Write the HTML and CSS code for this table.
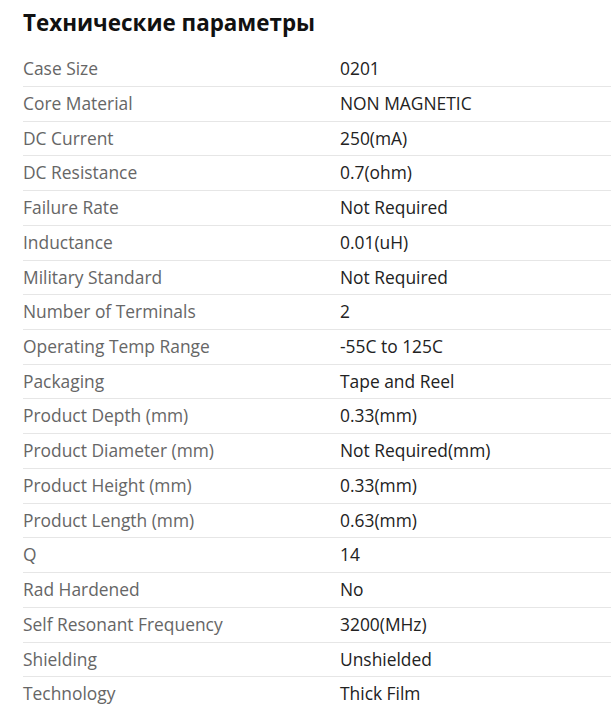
FILE: index.html
```html
<!DOCTYPE html>
<html lang="ru">
<head>
<meta charset="utf-8">
<link rel="stylesheet" href="styles.css">
</head>
<body>
<section class="specs">
  <h2 class="specs-title">Технические параметры</h2>
  <dl class="specs-list">
    <div class="row"><dt>Case Size</dt><dd>0201</dd></div>
    <div class="row"><dt>Core Material</dt><dd>NON MAGNETIC</dd></div>
    <div class="row"><dt>DC Current</dt><dd>250(mA)</dd></div>
    <div class="row"><dt>DC Resistance</dt><dd>0.7(ohm)</dd></div>
    <div class="row"><dt>Failure Rate</dt><dd>Not Required</dd></div>
    <div class="row"><dt>Inductance</dt><dd>0.01(uH)</dd></div>
    <div class="row"><dt>Military Standard</dt><dd>Not Required</dd></div>
    <div class="row"><dt>Number of Terminals</dt><dd>2</dd></div>
    <div class="row"><dt>Operating Temp Range</dt><dd>-55C to 125C</dd></div>
    <div class="row"><dt>Packaging</dt><dd>Tape and Reel</dd></div>
    <div class="row"><dt>Product Depth (mm)</dt><dd>0.33(mm)</dd></div>
    <div class="row"><dt>Product Diameter (mm)</dt><dd>Not Required(mm)</dd></div>
    <div class="row"><dt>Product Height (mm)</dt><dd>0.33(mm)</dd></div>
    <div class="row"><dt>Product Length (mm)</dt><dd>0.63(mm)</dd></div>
    <div class="row"><dt>Q</dt><dd>14</dd></div>
    <div class="row"><dt>Rad Hardened</dt><dd>No</dd></div>
    <div class="row"><dt>Self Resonant Frequency</dt><dd>3200(MHz)</dd></div>
    <div class="row"><dt>Shielding</dt><dd>Unshielded</dd></div>
    <div class="row"><dt>Technology</dt><dd>Thick Film</dd></div>
  </dl>
</section>
</body>
</html>
```

FILE: styles.css
```css
html, body {
  margin: 0;
  padding: 0;
  background: #fff;
}
body {
  font-family: "Open Sans", "Liberation Sans", sans-serif;
}
.specs {
  padding: 7.5px 0 0 23px;
}
.specs-title {
  margin: 0 0 14.8px 0;
  font-size: 22.4px;
  line-height: 30px;
  font-weight: 700;
  color: #111;
}
.specs-list {
  margin: 0;
  font-size: 17.4px;
  line-height: 23px;
}
.specs-list .row {
  display: grid;
  grid-template-columns: 317px 1fr;
  box-sizing: border-box;
  height: 34.72px;
  padding-top: 5px;
  border-bottom: 1px solid #e6e6e6;
}
.specs-list dt {
  color: #666;
}
.specs-list dd {
  margin: 0;
  color: #222;
}
```
